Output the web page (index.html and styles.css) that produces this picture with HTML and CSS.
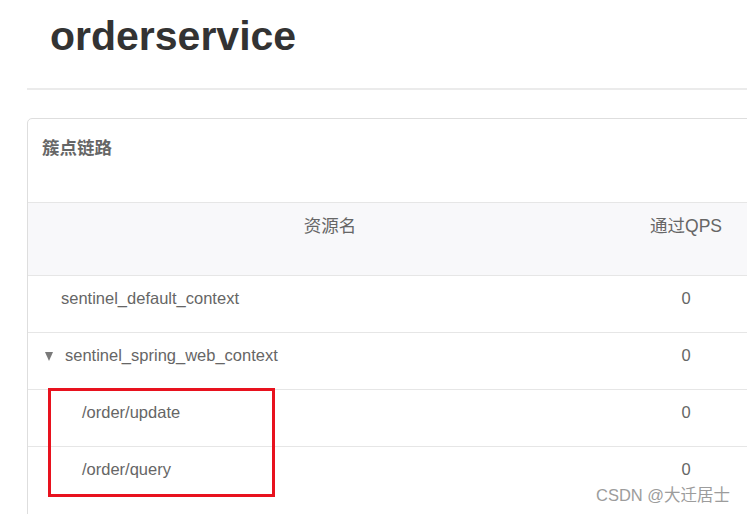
FILE: index.html
```html
<!DOCTYPE html>
<html lang="zh">
<head>
<meta charset="utf-8">
<title>orderservice</title>
<link rel="stylesheet" href="styles.css">
</head>
<body>
<div class="page">
  <h1 class="title">orderservice</h1>
  <hr class="divider">
  <section class="card">
    <div class="card-head">簇点链路</div>
    <div class="table">
      <div class="row head">
        <div class="cell name">资源名</div>
        <div class="cell num">通过QPS</div>
        <div class="cell"></div>
      </div>
      <div class="row">
        <div class="cell name-l0">sentinel_default_context</div>
        <div class="cell num">0</div>
        <div class="cell"></div>
      </div>
      <div class="row">
        <div class="cell name-toggle"><span class="caret"></span>sentinel_spring_web_context</div>
        <div class="cell num">0</div>
        <div class="cell"></div>
      </div>
      <div class="row">
        <div class="cell name-l1">/order/update</div>
        <div class="cell num">0</div>
        <div class="cell"></div>
      </div>
      <div class="row">
        <div class="cell name-l1">/order/query</div>
        <div class="cell num">0</div>
        <div class="cell"></div>
      </div>
    </div>
  </section>
  <div class="highlight"></div>
  <div class="watermark">CSDN @大迁居士</div>
</div>
</body>
</html>
```
FILE: styles.css
```css
html, body {
  margin: 0;
  padding: 0;
  background: #fff;
}
body {
  width: 747px;
  height: 514px;
  overflow: hidden;
  font-family: "Liberation Sans", Arial, "Noto Sans CJK SC", sans-serif;
  color: #666;
}
.page {
  position: relative;
  box-sizing: border-box;
  width: 747px;
  height: 514px;
  overflow: hidden;
  padding: 13px 0 0 27px;
}
.title {
  margin: 0 0 0 23px;
  font-size: 41px;
  line-height: 46px;
  font-weight: bold;
  color: #333;
}
.divider {
  margin: 29px -300px 0 0;
  border: 0;
  height: 2px;
  background: #ebebeb;
}
.card {
  margin-top: 28px;
  margin-right: -300px;
  border: 1px solid #dedede;
  border-radius: 5px;
  height: 600px;
}
.card-head {
  padding: 19px 0 44px 14px;
  font-size: 17.5px;
  line-height: 20px;
  font-weight: bold;
  color: #666;
}
.row {
  display: grid;
  grid-template-columns: 604px 108px 1fr;
  box-sizing: border-box;
  height: 57px;
  border-top: 1px solid #e6e6e6;
  font-size: 16.5px;
  line-height: 19px;
  color: #666;
}
.row.head {
  height: 73px;
  background: #f8f8fa;
  font-size: 17.5px;
  line-height: 20px;
}
.cell {
  padding-top: 13px;
  white-space: nowrap;
}
.name {
  text-align: center;
}
.num {
  text-align: center;
}
.name-l0 {
  padding-left: 33px;
}
.name-toggle {
  padding-left: 17px;
}
.name-l1 {
  padding-left: 54px;
}
.caret {
  display: inline-block;
  width: 0;
  height: 0;
  border-left: 4.5px solid transparent;
  border-right: 4.5px solid transparent;
  border-top: 9px solid #7a7a7a;
  margin-right: 12px;
}
.highlight {
  position: absolute;
  left: 48px;
  top: 388px;
  width: 227px;
  height: 109px;
  box-sizing: border-box;
  border: 3px solid #e8121e;
}
.watermark {
  position: absolute;
  left: 596px;
  top: 486px;
  font-size: 16.5px;
  line-height: 19px;
  color: #9c9c9c;
  white-space: nowrap;
}
```
